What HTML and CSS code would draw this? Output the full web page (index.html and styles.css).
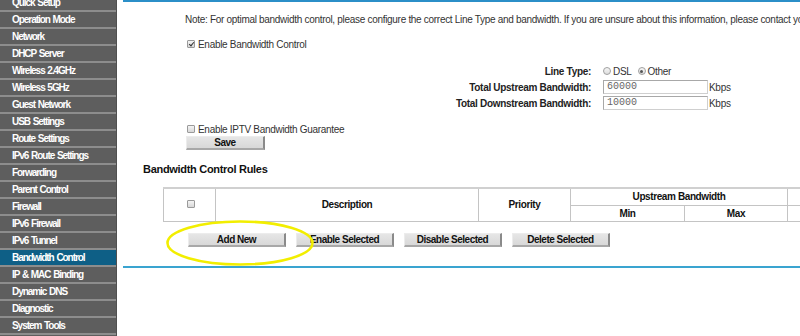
FILE: index.html
```html
<!DOCTYPE html>
<html>
<head>
<meta charset="utf-8">
<link rel="stylesheet" href="styles.css">
</head>
<body>
<div class="page">
  <nav class="menu">
    <div class="item">Quick Setup</div>
    <div class="item">Operation Mode</div>
    <div class="item">Network</div>
    <div class="item">DHCP Server</div>
    <div class="item">Wireless 2.4GHz</div>
    <div class="item">Wireless 5GHz</div>
    <div class="item">Guest Network</div>
    <div class="item">USB Settings</div>
    <div class="item">Route Settings</div>
    <div class="item">IPv6 Route Settings</div>
    <div class="item">Forwarding</div>
    <div class="item">Parent Control</div>
    <div class="item">Firewall</div>
    <div class="item">IPv6 Firewall</div>
    <div class="item">IPv6 Tunnel</div>
    <div class="item active">Bandwidth Control</div>
    <div class="item">IP &amp; MAC Binding</div>
    <div class="item">Dynamic DNS</div>
    <div class="item">Diagnostic</div>
    <div class="item">System Tools</div>
  </nav>
  <main class="main">
    <div class="panel">
      <p class="note">Note: For optimal bandwidth control, please configure the correct Line Type and bandwidth. If you are unsure about this information, please contact your ISP.</p>
      <div class="check-row first"><span class="cb checked"></span><span>Enable Bandwidth Control</span></div>
      <div class="form">
        <div class="frow"><span class="flabel">Line Type:</span><span class="radio"></span><span class="rtext">DSL</span><span class="radio on"></span><span class="rtext">Other</span></div>
        <div class="frow"><span class="flabel">Total Upstream Bandwidth:</span><span class="input">60000</span><span class="unit">Kbps</span></div>
        <div class="frow"><span class="flabel">Total Downstream Bandwidth:</span><span class="input">10000</span><span class="unit">Kbps</span></div>
      </div>
      <div class="check-row iptv"><span class="cb"></span><span>Enable IPTV Bandwidth Guarantee</span></div>
      <div class="save-row"><span class="btn save">Save</span></div>
      <h2 class="heading">Bandwidth Control Rules</h2>
      <div class="table-wrap">
        <table class="rules">
          <colgroup>
            <col class="c-cb"><col class="c-desc"><col class="c-pri"><col class="c-min"><col class="c-max"><col class="c-more">
          </colgroup>
          <tr class="r1">
            <th rowspan="2"><span class="cb"></span></th>
            <th rowspan="2">Description</th>
            <th rowspan="2">Priority</th>
            <th colspan="2">Upstream Bandwidth</th>
            <th></th>
          </tr>
          <tr class="r2">
            <th>Min</th>
            <th>Max</th>
            <th></th>
          </tr>
        </table>
      </div>
      <div class="btn-row">
        <span class="btn wide">Add New</span>
        <span class="btn wide">Enable Selected</span>
        <span class="btn wide">Disable Selected</span>
        <span class="btn wide">Delete Selected</span>
      </div>
      <svg class="mark" width="150" height="48" viewBox="0 0 150 48"><ellipse cx="75" cy="24" rx="72.5" ry="21.5" fill="none" stroke="#f2ee00" stroke-width="2.6"/></svg>
    </div>
  </main>
</div>
</body>
</html>
```
FILE: styles.css
```css
* { box-sizing: border-box; }
html, body { margin: 0; padding: 0; background: #fff; }
body { font-family: "Liberation Sans", Arial, sans-serif; font-size: 10px; letter-spacing: -0.3px; color: #222; overflow: hidden; width: 800px; height: 336px; }
.page { display: flex; width: 800px; height: 336px; overflow: hidden; }
.menu { width: 117px; flex: none; background: #5e5e5e; border-right: 1px solid #505050; margin-top: -5px; }
.item { height: 17px; line-height: 15px; padding-left: 12px; color: #fff; font-weight: bold; font-size: 10px; letter-spacing: -1.05px; word-spacing: 1px; border-bottom: 2px solid #8d8d8d; white-space: nowrap; background: #5e5e5e; }
.item.active { background: #0e5f86; }
.main { flex: 1; padding-left: 6px; overflow: hidden; }
.panel { position: relative; border-top: 2px solid #2b8fc8; border-bottom: 2px solid #3aa4d0; height: 268px; padding-left: 62px; white-space: nowrap; }
.note { margin: 11px 0 0 0; line-height: 13px; color: #333; }
.check-row { display: flex; align-items: center; gap: 3px; height: 14px; color: #333; }
.check-row.first { margin-top: 11px; }
.check-row.iptv { margin-top: 11px; }
.cb { display: inline-block; width: 8px; height: 8px; border: 1px solid #9a9a9a; border-radius: 1px; background: linear-gradient(#f4f4f4, #d8d8d8); position: relative; margin-left: 2px; }
.cb.checked::after { content: ""; position: absolute; left: 2px; top: 0px; width: 2px; height: 4px; border-right: 1.5px solid #333; border-bottom: 1.5px solid #333; transform: rotate(40deg); }
.form { margin-top: 12px; }
.frow { display: flex; align-items: center; height: 16px; }
.flabel { width: 480px; margin-left: -62px; text-align: right; font-weight: bold; color: #222; padding-right: 12px; letter-spacing: -0.3px; }
.radio { width: 8px; height: 8px; border: 1px solid #a0a0a0; border-radius: 50%; background: linear-gradient(#f6f6f6, #dddddd); display: inline-block; position: relative; }
.radio.on::after { content: ""; position: absolute; left: 1.5px; top: 1.5px; width: 3px; height: 3px; border-radius: 50%; background: #555; }
.rtext { margin-left: 2px; margin-right: 6px; color: #333; }
.input { width: 105px; height: 14px; border: 1px solid #cfcfcf; border-top-color: #a8a8a8; border-left-color: #a8a8a8; font-family: "Liberation Mono", monospace; font-size: 10px; letter-spacing: 0; line-height: 12px; color: #666; padding-left: 3px; background: #fff; }
.unit { margin-left: 1px; color: #333; }
.save-row { padding-left: 1px; }
.btn { display: inline-block; height: 14px; line-height: 12px; text-align: center; font-weight: bold; letter-spacing: -0.5px; color: #111; background: linear-gradient(#e6e6e6, #d8d8d8); border: 1px solid #c0c0c0; border-right: 2px solid #8a8a8a; border-bottom: 2px solid #a8a8a8; border-top-color: #ececec; border-left-color: #ececec; }
.btn.save { width: 79px; }
.heading { font-size: 11px; font-weight: bold; letter-spacing: -0.3px; color: #111; margin: 12px 0 0 -42px; line-height: 14px; }
.table-wrap { margin-top: 11px; margin-left: -22px; width: 700px; }
.rules { border-collapse: collapse; table-layout: fixed; width: 664px; border-top: 2px solid #d0d0d0; }
.rules th { border: 1px solid #c4c4c4; font-weight: bold; letter-spacing: -0.4px; color: #111; padding: 0; height: 16px; }
.rules .r1 th { height: 17px; }
.c-cb { width: 52px; }
.c-desc { width: 263px; }
.c-pri { width: 92px; }
.c-min { width: 114px; }
.c-max { width: 103px; }
.c-more { width: 40px; }
.btn-row { display: flex; gap: 10px; margin-top: 11px; padding-left: 3px; }
.btn.wide { width: 98px; }
.mark { position: absolute; left: 42px; top: 217px; }
```
